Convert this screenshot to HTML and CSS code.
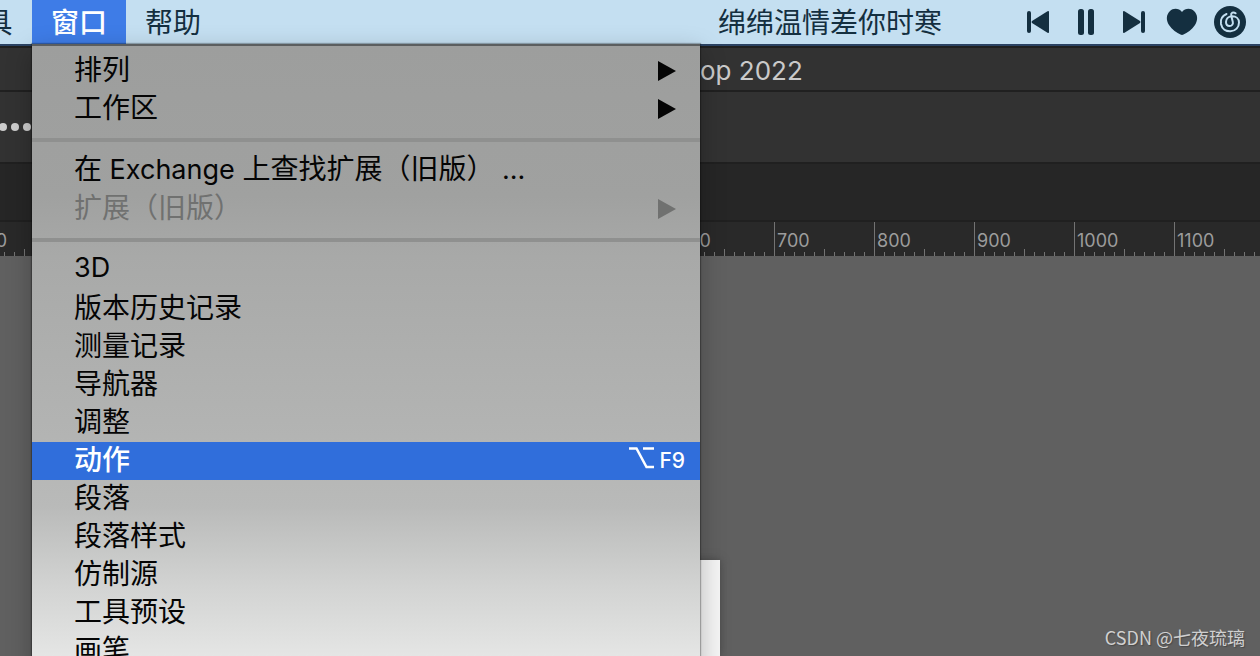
FILE: index.html
```html
<!DOCTYPE html>
<html lang="zh-CN">
<head>
<meta charset="utf-8">
<title>Photoshop</title>
<link rel="stylesheet" href="styles.css">
</head>
<body>
<header class="menubar">
  <nav class="menubar-menus">
    <button class="menubar-item menubar-item-cut">具</button>
    <button class="menubar-item menubar-item-open">窗口</button>
    <button class="menubar-item">帮助</button>
  </nav>
  <div class="player">
    <span class="song">绵绵温情差你时寒</span>
    <div class="player-buttons">
      <button class="player-button" aria-label="上一首"><svg width="48" height="44" viewBox="0 0 48 44"><rect x="13" y="11" width="4" height="22" rx="2"/><path d="M35 12v20q0 1.500-1.500.8L18 23q-1-1 0-2L33.500 11.200Q35 10.500 35 12z"/></svg></button>
      <button class="player-button" aria-label="暂停"><svg width="48" height="44" viewBox="0 0 48 44"><rect x="16" y="9" width="6" height="26" rx="2.500"/><rect x="26" y="9" width="6" height="26" rx="2.500"/></svg></button>
      <button class="player-button" aria-label="下一首"><svg width="48" height="44" viewBox="0 0 48 44"><rect x="31" y="11" width="4" height="22" rx="2"/><path d="M13 12v20q0 1.500 1.500.8L30 23q1-1 0-2L14.500 11.200Q13 10.500 13 12z"/></svg></button>
      <button class="player-button" aria-label="喜欢"><svg width="48" height="44" viewBox="0 0 48 44"><path d="M24 12C21 8 15 8 12 11C8 15 8 20 11 25C14 29.500 19 33 22.500 34.600Q24 35.300 25.500 34.600C29 33 34 29.500 37 25C40 20 40 15 36 11C33 8 27 8 24 12z"/></svg></button>
      <button class="player-button" aria-label="网易云音乐"><svg width="48" height="44" viewBox="0 0 48 44"><circle cx="24" cy="22" r="16"/><path class="swirl" d="M20.500 14C16 16 14.300 20 15 24C16 29 20 31.500 24.500 31.300C29.500 31 33 27.500 33 22.500C33 18.500 30 16.300 26.300 16.300C22.300 16.300 20 19 20 22C20 24.500 21.600 26 23.600 26C26 26 27.300 24 26.800 22L25.200 15.500C24.700 12.800 27.300 11.500 29.600 13.300"/></svg></button>
    </div>
  </div>
</header>
<main class="app">
  <div class="titlebar">op 2022</div>
  <div class="options"><span class="dot"></span><span class="dot"></span><span class="dot"></span></div>
  <div class="tabs"></div>
  <div class="ruler">
    <span class="mark">100</span><span class="mark"></span><span class="mark"></span><span class="mark"></span><span class="mark"></span><span class="mark"></span><span class="mark"></span><span class="mark">600</span><span class="mark">700</span><span class="mark">800</span><span class="mark">900</span><span class="mark">1000</span><span class="mark">1100</span>
  </div>
  <div class="canvas"><div class="artboard"></div></div>
</main>
<div class="menu">
  <button class="item">排列<svg class="arrow" width="18" height="20" viewBox="0 0 18 20"><path d="M0 0L18 10L0 20z"/></svg></button>
  <button class="item">工作区<svg class="arrow" width="18" height="20" viewBox="0 0 18 20"><path d="M0 0L18 10L0 20z"/></svg></button>
  <hr class="separator">
  <button class="item"><span class="label">在<span class="latin"> Exchange </span>上查找扩展（旧版）<span class="latin"> ...</span></span></button>
  <button class="item" disabled>扩展（旧版）<svg class="arrow" width="18" height="20" viewBox="0 0 18 20"><path d="M0 0L18 10L0 20z"/></svg></button>
  <hr class="separator">
  <button class="item"><span class="latin">3D</span></button>
  <button class="item">版本历史记录</button>
  <button class="item">测量记录</button>
  <button class="item">导航器</button>
  <button class="item">调整</button>
  <button class="item item-active">动作<span class="shortcut"><svg width="25" height="22" viewBox="0 0 25 22" aria-label="Option"><path d="M0 1.500H7.500L17.500 20H25M14 1.500H25"/></svg><span class="key">F9</span></span></button>
  <button class="item">段落</button>
  <button class="item">段落样式</button>
  <button class="item">仿制源</button>
  <button class="item">工具预设</button>
  <button class="item">画笔</button>
</div>
<div class="watermark">CSDN @七夜琉璃</div>
</body>
</html>
```
FILE: styles.css
```css
* {
  box-sizing: border-box;
}

body {
  position: relative;
  display: flex;
  flex-direction: column;
  height: 100vh;
  margin: 0;
  overflow: hidden;
  background: #606060;
  font-family: "Noto Sans CJK SC", sans-serif;
  font-size: 28px;
}

button {
  margin: 0;
  padding: 0;
  border: 0;
  background: none;
  color: inherit;
  font: inherit;
}

svg {
  display: block;
}

.menubar {
  display: flex;
  flex: none;
  justify-content: space-between;
  height: 46px;
  border-bottom: 2px solid #2b4363;
  background: #c4dff1;
  color: #142f40;
}

.menubar-menus,
.player,
.player-buttons {
  display: flex;
}

.menubar-item {
  height: 44px;
  padding: 0 19px 2px;
  line-height: 42px;
}

.menubar-item-cut {
  margin-left: -35px;
}

.menubar-item-open {
  background: #3e7ce7;
  color: #fff;
  font-weight: 500;
}

.menubar-item-cut {
  width: 67px;
}

.player {
  gap: 72px;
  padding-right: 6px;
}

.song {
  line-height: 42px;
}

.player-button {
  width: 48px;
  height: 44px;
  fill: #142f40;
}

.swirl {
  fill: none;
  stroke: #c4dff1;
  stroke-width: 2;
  stroke-linecap: round;
}

.app {
  display: flex;
  flex: 1;
  flex-direction: column;
}

.titlebar {
  height: 46px;
  padding-left: 700px;
  border-top: 2px solid #202020;
  border-bottom: 2px solid #202020;
  background: #323232;
  color: #cacaca;
  font-family: Inter, sans-serif;
  font-size: 26px;
  line-height: 46px;
}

.options {
  display: flex;
  align-items: center;
  gap: 4px;
  height: 72px;
  border-bottom: 2px solid #202020;
  background: #323232;
}

.dot {
  width: 8px;
  height: 8px;
  border-radius: 50%;
  background: #ccc;
}

.dot:first-child {
  margin-left: -1px;
}

.tabs {
  height: 58px;
  border-bottom: 2px solid #202020;
  background: #262626;
}

.ruler {
  display: flex;
  height: 34px;
  margin-left: -26px;
  overflow: hidden;
  background: #292929;
}

.mark {
  flex: none;
  width: 100px;
  padding-left: 2px;
  border-left: 1px solid #737373;
  background:
    linear-gradient(#737373, #737373) 49px 100% / 1px 7px no-repeat,
    repeating-linear-gradient(90deg, transparent 0 9px, #737373 9px 10px) 0 100% / 100% 4px no-repeat;
  color: #9c9c9c;
  font-family: Inter, sans-serif;
  font-size: 18px;
  line-height: 38px;
}

.canvas {
  flex: 1;
  padding: 304px 0 0 74px;
  background: #606060;
}

.artboard {
  width: 646px;
  height: 100%;
  background: #f5f5f5;
  box-shadow: 0 0 8px #444;
}

.menu {
  position: absolute;
  top: 44px;
  left: 32px;
  width: 668px;
  padding-top: 6px;
  border-top: 2px solid #5b5e5f;
  background: linear-gradient(#9d9e9d 0, #a0a1a0 150px, #a8a9a8 210px, #b3b4b3 390px, #b9bab9 460px, #d2d3d2 540px, #e5e6e5 612px);
  box-shadow: 0 0 1px 1px #0004, 0 8px 24px #0004;
  color: #050505;
}

.item {
  display: flex;
  align-items: center;
  justify-content: space-between;
  width: 100%;
  height: 38px;
  padding: 0 15px 6px 42px;
  line-height: 32px;
  text-align: left;
}

.item:disabled {
  color: #707170;
}

.item-active {
  background: #306edb;
  color: #fff;
  font-weight: 500;
}

.label {
  white-space: pre;
}

.latin {
  font-family: Inter, sans-serif;
  font-size: 27px;
}

.arrow {
  margin: 6px 9px 0 0;
  fill: currentColor;
}

.shortcut {
  display: flex;
  align-items: center;
  gap: 5px;
  font-family: Inter, sans-serif;
  font-size: 21px;
}

.shortcut path {
  fill: none;
  stroke: #fff;
  stroke-width: 2.500;
}

.key {
  padding-top: 6px;
}

.separator {
  height: 4px;
  margin: 10px 0;
  border: 0;
  background: #8f908f;
}

.watermark {
  position: absolute;
  right: 15px;
  bottom: 7px;
  color: #d0d0d0;
  font-size: 18px;
  line-height: 24px;
  text-shadow: 1px 1px 1px #3338;
}
```
